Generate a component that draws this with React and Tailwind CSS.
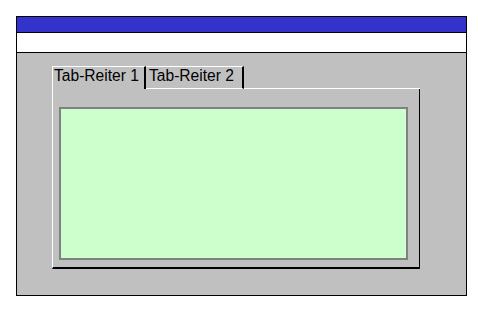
export default function App() {
  return (
    <div className="w-[478px] h-[310px] bg-white pt-[16px] pl-[16px]" style={{ fontFamily: '"Liberation Sans", Arial, sans-serif' }}>
      <div className="w-[451px] h-[280px] border border-black flex flex-col">
        <div className="h-[16px] bg-[#3333cc] border-b border-black" />
        <div className="h-[20px] bg-white border-b border-black" />
        <div className="flex-1 bg-[#c0c0c0] pl-[35px] pt-[13px]">
          <div className="w-[368px]">
            <div className="flex h-[23px] text-[15.6px] leading-[18px] text-black">
              <div className="w-[94px] border-t border-l border-white border-r-2 border-r-black pl-[1px] whitespace-nowrap">Tab-Reiter 1</div>
              <div className="w-[98px] border-t border-b border-white border-r-2 border-r-black pl-[3px] whitespace-nowrap">Tab-Reiter 2</div>
              <div className="flex-1 border-b border-white" />
            </div>
            <div className="h-[180px] border-l border-white border-r border-r-black border-b-2 border-b-black pl-[6px] pt-[18px]">
              <div className="w-[349px] h-[153px] bg-[#ccffcc] border-2 border-[#808080]" />
            </div>
          </div>
        </div>
      </div>
    </div>
  );
}
